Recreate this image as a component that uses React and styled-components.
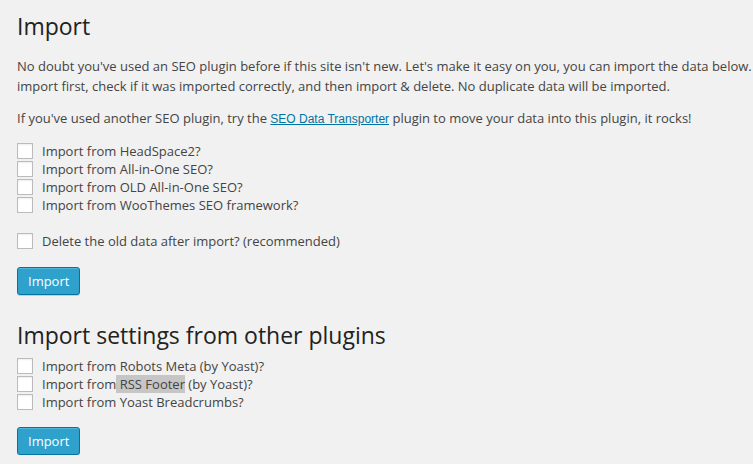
import React from 'react';
import styled, { createGlobalStyle } from 'styled-components';

const GlobalStyle = createGlobalStyle`
  html, body {
    margin: 0;
    padding: 0;
    background: #f1f1f1;
    overflow: hidden;
  }
  body {
    font-family: "Open Sans", sans-serif;
    font-size: 13px;
    color: #444;
  }
`;

const Wrap = styled.div`
  width: 900px;
  padding: 0 17px;
  box-sizing: border-box;
`;

const Heading = styled.h2`
  font-family: "Open Sans", sans-serif;
  font-weight: 400;
  font-size: 23px;
  line-height: 29px;
  color: #222;
  margin: ${({ first }) => (first ? '12px 0 0' : '26px 0 0')};
`;

const Text = styled.p`
  margin: ${({ top }) => top || 13}px 0 0;
  line-height: 19.5px;
`;

const Link = styled.a`
  font-family: "Liberation Sans", Arial, sans-serif;
  font-size: 12px;
  color: #0074a2;
  text-decoration: underline;
`;

const CheckList = styled.div`
  display: flex;
  flex-direction: column;
  margin-top: ${({ top }) => top}px;
`;

const Row = styled.label`
  display: flex;
  align-items: center;
  height: 18px;
  line-height: 18px;
  margin-top: ${({ gap }) => gap || 0}px;
`;

const Box = styled.span`
  width: 16px;
  height: 16px;
  box-sizing: border-box;
  border: 1px solid #bbb;
  background: #fff;
  box-shadow: inset 0 1px 2px rgba(0, 0, 0, 0.07);
  margin-right: 9px;
  flex: none;
`;

const Mark = styled.span`
  background: #c6c6c6;
`;

const Button = styled.button`
  display: block;
  height: 28px;
  padding: 0 10px 1px;
  margin-top: ${({ top }) => top}px;
  font-family: "Open Sans", sans-serif;
  font-size: 13px;
  line-height: 26px;
  color: #fff;
  background: #2ea2cc;
  border: 1px solid #0074a2;
  border-radius: 3px;
  box-shadow: inset 0 1px 0 rgba(120, 200, 230, 0.5), 0 1px 0 rgba(0, 0, 0, 0.15);
`;

const Check = ({ children, gap }) => (
  <Row gap={gap}>
    <Box />
    <span>{children}</span>
  </Row>
);

export default function App() {
  return (
    <Wrap>
      <GlobalStyle />
      <Heading first>Import</Heading>
      <Text top={16}>
        No doubt you've used an SEO plugin before if this site isn't new. Let's make it easy on you, you can
        import the data below. If you want, you can import first, check if it was imported correctly, and then
        import &amp; delete. No duplicate data will be imported.
      </Text>
      <Text>
        If you've used another SEO plugin, try the <Link href="#">SEO Data Transporter</Link> plugin to move
        your data into this plugin, it rocks!
      </Text>
      <CheckList top={12}>
        <Check>Import from HeadSpace2?</Check>
        <Check>Import from All-in-One SEO?</Check>
        <Check>Import from OLD All-in-One SEO?</Check>
        <Check>Import from WooThemes SEO framework?</Check>
        <Check gap={18}>Delete the old data after import? (recommended)</Check>
      </CheckList>
      <Button top={17}>Import</Button>
      <Heading>Import settings from other plugins</Heading>
      <CheckList top={7}>
        <Check>Import from Robots Meta (by Yoast)?</Check>
        <Check>
          Import from<Mark> RSS Footer</Mark> (by Yoast)?
        </Check>
        <Check>Import from Yoast Breadcrumbs?</Check>
      </CheckList>
      <Button top={16}>Import</Button>
    </Wrap>
  );
}
